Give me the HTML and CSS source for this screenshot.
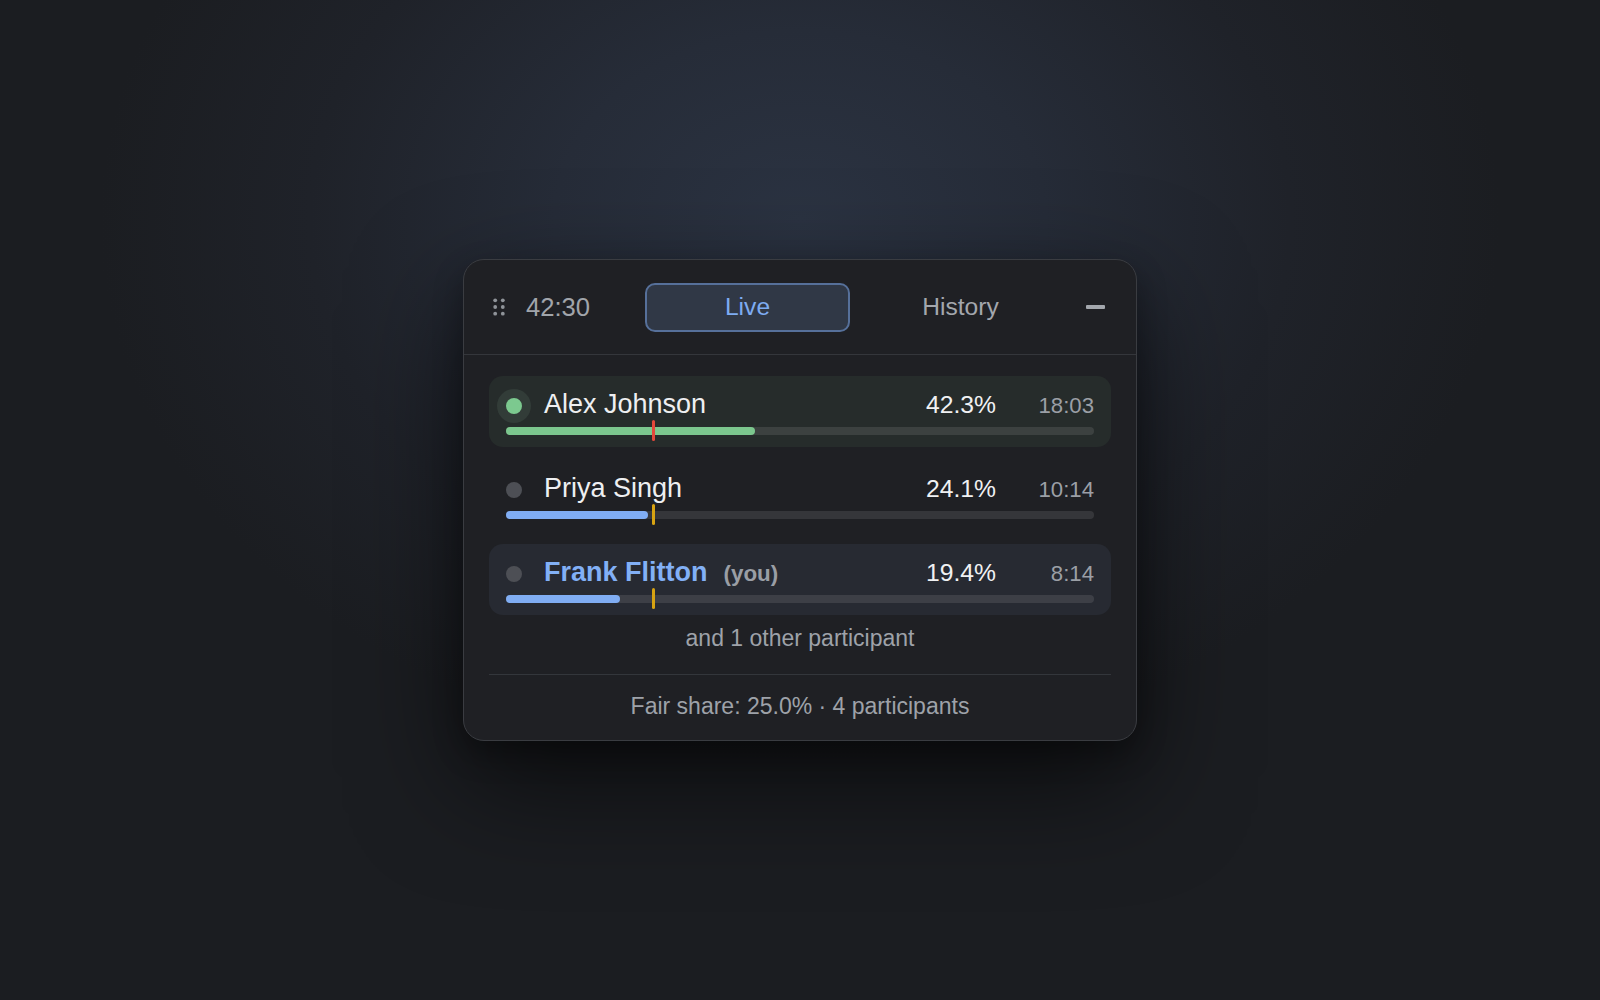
FILE: index.html
```html
<!DOCTYPE html>
<html lang="en">
<head>
<meta charset="utf-8">
<title>Speaking time</title>
<link rel="stylesheet" href="styles.css">
</head>
<body>
<div class="card">
  <div class="header">
    <svg class="grip" width="12" height="18" viewBox="0 0 12 18" aria-hidden="true">
      <circle cx="2.2" cy="2.3" r="1.9"/><circle cx="9.8" cy="2.3" r="1.9"/>
      <circle cx="2.2" cy="9" r="1.9"/><circle cx="9.8" cy="9" r="1.9"/>
      <circle cx="2.2" cy="15.7" r="1.9"/><circle cx="9.8" cy="15.7" r="1.9"/>
    </svg>
    <span class="clock">42:30</span>
    <div class="tabs">
      <button class="tab tab-active">Live</button>
      <button class="tab">History</button>
    </div>
    <button class="minimize" aria-label="Minimize"><span class="minus"></span></button>
  </div>
  <div class="body">
    <div class="list">
      <div class="row row-speaking">
        <div class="top">
          <span class="dot dot-live"></span>
          <span class="name">Alex Johnson</span>
          <span class="pct">42.3%</span>
          <span class="time">18:03</span>
        </div>
        <div class="track">
          <div class="fill fill-green" style="width:42.3%"></div>
          <span class="marker marker-over"></span>
        </div>
      </div>
      <div class="row">
        <div class="top">
          <span class="dot"></span>
          <span class="name">Priya Singh</span>
          <span class="pct">24.1%</span>
          <span class="time">10:14</span>
        </div>
        <div class="track">
          <div class="fill fill-blue" style="width:24.1%"></div>
          <span class="marker"></span>
        </div>
      </div>
      <div class="row row-self">
        <div class="top">
          <span class="dot"></span>
          <span class="name name-self">Frank Flitton</span>
          <span class="you">(you)</span>
          <span class="pct">19.4%</span>
          <span class="time">8:14</span>
        </div>
        <div class="track">
          <div class="fill fill-blue" style="width:19.4%"></div>
          <span class="marker"></span>
        </div>
      </div>
    </div>
    <div class="more">and 1 other participant</div>
    <div class="divider"></div>
    <div class="footer">Fair share: 25.0% · 4 participants</div>
  </div>
</div>
</body>
</html>
```

FILE: styles.css
```css
* { box-sizing: border-box; }

html, body {
  margin: 0;
  height: 100%;
}

body {
  font-family: "Liberation Sans", Arial, Helvetica, sans-serif;
  background-color: #1b1d21;
  background-image: radial-gradient(ellipse 700px 540px at 50% 22%, #2b3342 0%, #262c38 35%, #1f2229 70%, #1b1d21 100%);
  display: flex;
  align-items: center;
  justify-content: center;
}

.card {
  width: 674px;
  background: #1f2024;
  border: 1px solid #3a3c41;
  border-radius: 21px;
  box-shadow: 0 40px 110px rgba(0, 0, 0, 0.62), 0 12px 30px rgba(0, 0, 0, 0.3);
  overflow: hidden;
}

.header {
  height: 95px;
  display: flex;
  align-items: center;
  padding: 0 31px 0 29px;
  border-bottom: 1px solid #34363b;
}

.grip {
  fill: #8f9399;
  flex: none;
  margin-right: 21px;
}

.clock {
  font-size: 25.6px;
  color: #a1a5ab;
  width: 64px;
  white-space: nowrap;
}

.tabs {
  display: flex;
  gap: 8px;
  margin-left: 55px;
}

.tab {
  width: 205px;
  height: 49px;
  border-radius: 10px;
  border: 2px solid transparent;
  background: transparent;
  font-family: inherit;
  font-size: 24.6px;
  color: #a3a7ad;
  padding: 0;
  cursor: pointer;
}

.tab-active {
  background: #303846;
  border-color: #56709a;
  color: #7eacf2;
}

.minimize {
  margin-left: 23px;
  width: 19px;
  height: 20px;
  padding: 0;
  border: 0;
  background: transparent;
  display: flex;
  align-items: center;
  cursor: pointer;
}

.minus {
  display: block;
  width: 19px;
  height: 3.5px;
  border-radius: 1px;
  background: #a3a7ad;
}

.body {
  padding: 21px 25px 0;
}

.list {
  display: flex;
  flex-direction: column;
  gap: 13px;
}

.row {
  height: 71px;
  padding: 13px 17px 12px;
  border-radius: 14px;
}

.row-speaking { background: #262c2b; }
.row-self { background: #272a32; }

.top {
  height: 31px;
  display: flex;
  align-items: baseline;
  line-height: 31px;
  white-space: nowrap;
}

.dot {
  flex: none;
  width: 16px;
  height: 16px;
  border-radius: 50%;
  background: #4d4f55;
  margin-right: 22px;
  align-self: center;
  position: relative;
  top: 1px;
}

.dot-live {
  background: #7cc98f;
  box-shadow: 0 0 0 9px #323c38;
}

.name {
  font-size: 27px;
  color: #eeeff1;
}

.name-self {
  font-weight: bold;
  color: #82b0f6;
}

.you {
  font-size: 22.4px;
  font-weight: bold;
  color: #9a9ea5;
  margin-left: 16px;
}

.pct {
  margin-left: auto;
  font-size: 24.7px;
  color: #f0f1f3;
}

.time {
  width: 98px;
  text-align: right;
  font-size: 22.2px;
  color: #9b9fa6;
}

.track {
  position: relative;
  margin-top: 7px;
  height: 8px;
  border-radius: 4px;
  background: rgba(255, 255, 255, 0.1);
}

.fill {
  height: 100%;
  border-radius: 4px;
}

.fill-green { background: #7cc78e; }
.fill-blue { background: #80adf3; }

.marker {
  position: absolute;
  left: calc(25% - 1.5px);
  top: 50%;
  width: 3.5px;
  height: 21px;
  margin-top: -11px;
  border-radius: 1.5px;
  background: #d7a312;
}

.marker-over { background: #e4473b; }

.more {
  margin-top: 10px;
  line-height: 26px;
  font-size: 23px;
  text-align: center;
  color: #9ea2a9;
}

.divider {
  margin-top: 23px;
  height: 1px;
  background: #33363b;
}

.footer {
  padding: 18px 0 21px;
  line-height: 26px;
  font-size: 23px;
  text-align: center;
  color: #9ea2a9;
}
```
